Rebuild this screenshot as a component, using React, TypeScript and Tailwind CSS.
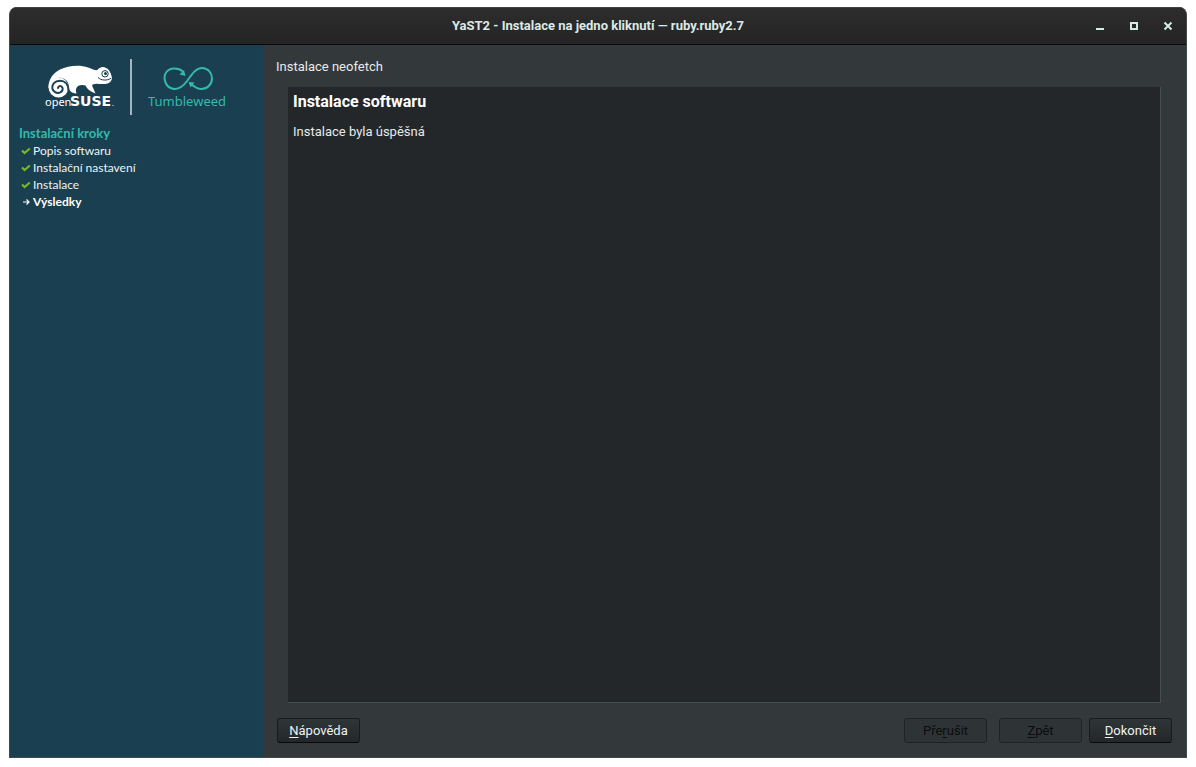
import React from 'react';

type StepState = 'done' | 'current';

interface Step {
  label: string;
  state: StepState;
}

const steps: Step[] = [
  { label: 'Popis softwaru', state: 'done' },
  { label: 'Instalační nastavení', state: 'done' },
  { label: 'Instalace', state: 'done' },
  { label: 'Výsledky', state: 'current' },
];

const OpenSuseLogo: React.FC = () => (
  <svg width="72" height="48" viewBox="44 62 72 48" role="img" aria-label="openSUSE">
    {/* body, legs and head */}
    <path
      fill="#fff"
      d="M48.500 88C48 80 53 73 60 69.500C68 65.500 80 64.500 88 67.500C91 68.600 94 70 97 70.300C99 67.500 103 66 106 68C109 69 111 73 111.800 77C112.500 81 109 84 105 84C100 84.500 97 83 92.500 84.500C91.500 86 94 89 95.500 93.500C91 92 87 89 85.500 85.500C83 84.500 80 84.800 78 86C75.500 88 75.500 91 76.500 93.500C71 93.500 68 90 68.500 84C66 77 56 75 50.500 83Z"
    />
    {/* curled tail */}
    <circle cx="58.500" cy="87.500" r="10" fill="#fff" />
    <path
      fill="none"
      stroke="#193f50"
      strokeWidth="2"
      strokeLinecap="round"
      d="M68.500 91C68.500 84 64.500 80.800 60 80.800C54.500 80.800 51.800 84.500 52.300 88.200C53 92 57 93.800 60.300 92.400C63 91 63.500 88 61.500 86.500C60 85.600 58 86.400 58 88"
    />
    {/* eye and mouth */}
    <circle cx="105" cy="73.800" r="3.200" fill="#fff" stroke="#193f50" strokeWidth="1" />
    <circle cx="105.500" cy="73.600" r="1.500" fill="#193f50" />
    <path fill="none" stroke="#193f50" strokeWidth="1" d="M98 77.500C101 80.500 107 81 111 78.200" />
    <text x="45" y="106" fill="#fff" fontFamily="Noto Sans, sans-serif" fontSize="11">
      open
    </text>
    <text x="70" y="106" fill="#fff" fontFamily="DejaVu Sans, sans-serif" fontSize="14" fontWeight="700">
      SUSE
    </text>
    <circle cx="113" cy="105.500" r="0.600" fill="#fff" />
  </svg>
);

const TumbleweedLogo: React.FC = () => (
  <svg width="84" height="48" viewBox="146 62 84 48" role="img" aria-label="Tumbleweed">
    <g fill="none" stroke="#35b9ab" strokeWidth="2">
      <path d="M183 71.500C178 67.500 170 67.500 166.500 72C162.500 77 165 86.500 172 88.500C178 90.500 183 86.500 187.500 80.500C192 74 196 68 202 68C208 68 212 73 212 78.500C212 84.500 207 89 201.500 89C197.500 89 194.500 87 191.500 84.500" />
    </g>
    <path fill="#35b9ab" d="M185.500 76L179.500 74.500L184 70ZM188.500 82L194.500 82.500L190.500 87.500Z" />
    <text x="148" y="106" fill="#35b9ab" fontFamily="Noto Sans, sans-serif" fontSize="13">
      Tumbleweed
    </text>
  </svg>
);

const DoneIcon: React.FC = () => (
  <svg width="10" height="10" viewBox="0 0 10 10" aria-hidden="true">
    <path d="M1 4.500L3.600 7L8.800 2.500" fill="none" stroke="#73ba25" strokeWidth="2.200" />
  </svg>
);

const CurrentIcon: React.FC = () => (
  <svg width="10" height="10" viewBox="0 0 10 10" aria-hidden="true">
    <path d="M2 5H8M5.500 2.500L8 5L5.500 7.500" fill="none" stroke="#fff" strokeWidth="1.200" />
  </svg>
);

interface DialogButtonProps {
  accessKey: string;
  before?: string;
  after: string;
  disabled?: boolean;
}

const DialogButton: React.FC<DialogButtonProps> = ({ accessKey, before, after, disabled }) => (
  <button
    type="button"
    disabled={disabled}
    className="h-[25px] w-[83px] rounded-[3px] border border-[#191c1e] border-b-[#08090a] bg-linear-to-b from-[#2f3436] to-[#25282a] text-[13px] leading-5 text-[#eef3f2] disabled:border-[#1f2325] disabled:bg-[#2e3336] disabled:bg-none disabled:text-[#0b0d0e]"
  >
    {before}
    <span className="underline underline-offset-2">{accessKey}</span>
    {after}
  </button>
);

const TitleBar: React.FC = () => (
  <header className="relative flex h-[38px] items-center justify-center border-t border-b border-t-[#414141] border-b-[#0a0a0a] bg-linear-to-b from-[#2d2d2d] to-[#242424]">
    <h1 className="text-[13px] font-bold text-[#dce9e6]">YaST2 - Instalace na jedno kliknutí — ruby.ruby2.7</h1>
    <div className="absolute right-[11px] flex gap-5">
      <button type="button" aria-label="Minimalizovat" className="size-[14px]">
        <svg width="14" height="14" viewBox="0 0 14 14">
          <path d="M3 10H11" stroke="#d3ebe6" strokeWidth="2" />
        </svg>
      </button>
      <button type="button" aria-label="Maximalizovat" className="size-[14px]">
        <svg width="14" height="14" viewBox="0 0 14 14">
          <path d="M4 4H10V10H4Z" fill="none" stroke="#d3ebe6" strokeWidth="2" />
        </svg>
      </button>
      <button type="button" aria-label="Zavřít" className="size-[14px]">
        <svg width="14" height="14" viewBox="0 0 14 14">
          <path d="M3.500 3.500L10.500 10.500M10.500 3.500L3.500 10.500" stroke="#d3ebe6" strokeWidth="2" />
        </svg>
      </button>
    </div>
  </header>
);

const Sidebar: React.FC = () => (
  <aside className="w-[253px] shrink-0 bg-[#193f50] px-[9px] pt-[14px] font-[Lato,sans-serif] text-[12px] leading-[17px] text-[#eef3f4]">
    <div className="flex h-14 justify-center gap-[14px]">
      <div className="pt-[3px]">
        <OpenSuseLogo />
      </div>
      <div className="w-[2px] bg-[#a3b6bd]" />
      <div className="pt-[3px]">
        <TumbleweedLogo />
      </div>
    </div>
    <h2 className="mt-[10px] text-[13px] font-bold text-[#35b9ab]">Instalační kroky</h2>
    <ol>
      {steps.map((step) => (
        <li key={step.label} className="flex items-center gap-[2px] pl-[2px]">
          {step.state === 'done' ? <DoneIcon /> : <CurrentIcon />}
          <span className={step.state === 'current' ? 'font-bold text-white' : ''}>{step.label}</span>
        </li>
      ))}
    </ol>
  </aside>
);

const App: React.FC = () => {
  return (
    <div className="flex min-h-screen bg-white px-[9px] pt-[7px] pb-[9px] font-[Roboto,sans-serif]">
      <div className="flex flex-1 flex-col overflow-hidden rounded-t-lg border-x border-b border-[#42474a] bg-[#33383b]">
        <TitleBar />
        <div className="flex flex-1">
          <Sidebar />
          <main className="flex flex-1 flex-col pt-3 pr-[14px] pb-[14px] pl-[13px] text-[13px] leading-5 text-[#e6eaea]">
            <p>Instalace neofetch</p>
            <section className="mt-[10px] mr-[11px] ml-3 flex-1 border-r border-b border-[#464d51] bg-[#23272a] px-[5px] pt-[5px]">
              <h2 className="text-base leading-5 font-bold text-white">Instalace softwaru</h2>
              <p className="mt-[10px]">Instalace byla úspěšná</p>
            </section>
            <footer className="mt-[15px] flex pl-px">
              <DialogButton accessKey="N" after="ápověda" />
              <div className="ml-auto flex gap-3">
                <DialogButton before="Pře" accessKey="r" after="ušit" disabled />
                <DialogButton accessKey="Z" after="pět" disabled />
              </div>
              <div className="ml-[7px]">
                <DialogButton accessKey="D" after="okončit" />
              </div>
            </footer>
          </main>
        </div>
      </div>
    </div>
  );
};

export default App;
